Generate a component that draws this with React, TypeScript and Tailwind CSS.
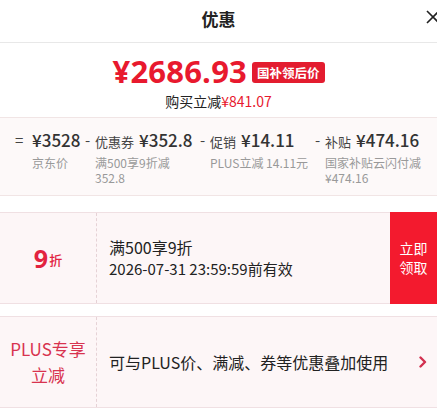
import React from 'react';

type Part = {
  sign: string;
  signWidth: string;
  width: string;
  label?: string;
  value: string;
  note: string;
};

const parts: Part[] = [
  { sign: '=', signWidth: 'w-[17px]', width: 'w-[70px]', value: '¥3528', note: '京东价' },
  { sign: '-', signWidth: 'w-[10px]', width: 'w-[115px]', label: '优惠券', value: '¥352.8', note: '满500享9折减 352.8' },
  { sign: '-', signWidth: 'w-[10px]', width: 'w-[115px]', label: '促销', value: '¥14.11', note: 'PLUS立减 14.11元' },
  { sign: '-', signWidth: 'w-[10px]', width: 'flex-1', label: '补贴', value: '¥474.16', note: '国家补贴云闪付减 ¥474.16' },
];

function CloseIcon() {
  return (
    <svg width="14" height="14" viewBox="0 0 14 14" fill="none" stroke="#222" strokeWidth="1.6">
      <path d="M1 1L13 13M13 1L1 13" />
    </svg>
  );
}

function Chevron() {
  return (
    <svg width="8" height="12" viewBox="0 0 8 12" fill="none" stroke="#d2304f" strokeWidth="2.4" strokeLinecap="round" strokeLinejoin="round">
      <path d="M1.5 1.5L6 6L1.5 10.5" />
    </svg>
  );
}

export default function App() {
  return (
    <div className="relative w-[437px] h-[414px] overflow-hidden bg-white text-[#333] font-['Noto_Sans_CJK_SC','Noto_Sans',sans-serif]">
      {/* 标题栏 */}
      <div className="relative h-[43px] border-b border-[#e8e8e8] flex items-center justify-center pb-[6px]">
        <span className="text-[17px] font-bold text-[#222] leading-none">优惠</span>
        <span className="absolute left-[426px] top-[10px]">
          <CloseIcon />
        </span>
      </div>

      {/* 到手价 */}
      <div className="flex flex-col items-center pt-[10px]">
        <div className="flex items-center h-[36px]">
          <span className="text-[31px] leading-[36px] font-bold text-[#e8192e] font-['Open_Sans',sans-serif] tracking-[0.2px]">
            ¥2686.93
          </span>
          <span className="ml-[5px] mt-[3px] h-[21px] px-[5px] rounded-[3px] bg-[#e31c2f] text-white text-[12.5px] font-bold leading-[21px]">
            国补领后价
          </span>
        </div>
        <div className="mt-[2px] text-[14px] leading-[20px]">
          <span className="text-[#222]">购买立减</span>
          <span className="text-[#e8192e]">¥841.07</span>
        </div>
      </div>

      {/* 价格拆分 */}
      <div className="mt-[6px] h-[79px] border-y border-[#f1e5e5] bg-[#fdf9f9] flex pl-[15px] pt-[11px]">
        {parts.map((p) => (
          <div key={p.value} className={`${p.width} flex`}>
            <span className={`${p.signWidth} shrink-0 text-[15px] leading-[22px] text-[#444]`}>{p.sign}</span>
            <div className="flex-1 pr-[6px]">
              <div className="flex items-baseline h-[22px] whitespace-nowrap">
                {p.label && <span className="text-[13px] text-[#444] mr-[5px]">{p.label}</span>}
                <span className="text-[17px] font-medium leading-[22px] text-[#333]">{p.value}</span>
              </div>
              <div className="mt-[4px] text-[12px] leading-[15px] text-[#999]">{p.note}</div>
            </div>
          </div>
        ))}
      </div>

      {/* 折扣券 */}
      <div className="mt-[16px] h-[92px] border-y border-[#f0e0e3] bg-[#fdf6f7] flex">
        <div className="w-[97px] shrink-0 border-r border-dashed border-[#e6d2d6] flex items-center justify-center text-[#e2233f]">
          <span className="text-[25px] font-bold leading-none font-['Open_Sans',sans-serif]">9</span>
          <span className="text-[13px] font-medium ml-[1px] mt-[4px]">折</span>
        </div>
        <div className="flex-1 pl-[12px] flex flex-col justify-center">
          <div className="text-[16px] leading-[22px] text-[#222]">满500享9折</div>
          <div className="text-[15px] leading-[22px] text-[#222]">2026-07-31 23:59:59前有效</div>
        </div>
        <div className="-my-px w-[47px] shrink-0 bg-[#f31a2e] text-white text-[14px] leading-[19px] flex flex-col items-center justify-center">
          <div>立即</div>
          <div>领取</div>
        </div>
      </div>

      {/* PLUS 立减 */}
      <div className="mt-[12px] h-[92px] border-y border-[#f0e0e3] bg-[#fdf6f7] flex">
        <div className="w-[97px] shrink-0 border-r border-dashed border-[#e6d2d6] flex flex-col items-center justify-center text-[17px] leading-[26px] text-[#d8334f]">
          <div>PLUS专享</div>
          <div>立减</div>
        </div>
        <div className="flex-1 pl-[12px] flex items-center text-[16px] text-[#222]">
          可与PLUS价、满减、券等优惠叠加使用
        </div>
        <div className="w-[14px] mr-[4px] flex items-center">
          <Chevron />
        </div>
      </div>
    </div>
  );
}
